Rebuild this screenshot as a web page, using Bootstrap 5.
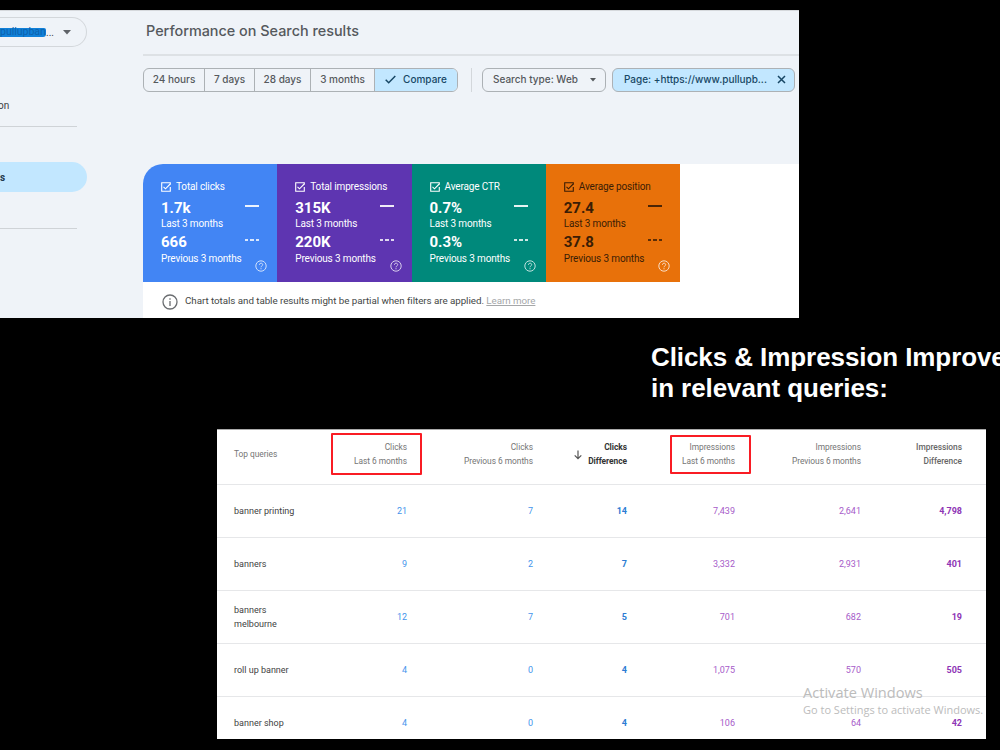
<!DOCTYPE html>
<html lang="en">
<head>
<meta charset="utf-8">
<meta name="viewport" content="width=device-width, initial-scale=1">
<title>Performance on Search results</title>
<link href="https://cdn.jsdelivr.net/npm/bootstrap@5.3.0/dist/css/bootstrap.min.css" rel="stylesheet">
<style>
html{overflow:hidden}
body{background:#000;width:1000px;height:750px;overflow:hidden;font-family:Roboto,sans-serif;color:#3c4043}
.console{margin-top:10px;width:799px;height:308px;background:#eff3f8;border-top:1px solid #d5d8dc}
.side{width:143px;flex:none;font-size:10px}
.site-pill{width:87px;height:30px;margin-top:6px;border:1px solid #d3d7db;border-left:0;border-radius:0 15px 15px 0;padding-right:15px}
.scribble{font-size:10.5px;line-height:8px;background:#1080d8;color:#0b62ad;width:46px;border-radius:0 2px 3px 0;height:9px}
.side-rule{width:77px;height:1px;background:#cfd3d7}
.side-on{width:87px;height:30px;background:#c2e7ff;border-radius:0 15px 15px 0;color:#1f3a4d}
.page-title{font-family:Inter,sans-serif;font-weight:500;font-size:14.4px;letter-spacing:0;height:43px;padding:0 0 4px 3px;color:#55595d}
.title-rule{height:2px;background:#dde1e5}
.gtext{font-family:Inter,sans-serif;font-size:10px;font-weight:500;color:#55595d}
.filters{margin-top:11.5px;height:24px}
.range,.chip{border:1.5px solid #acb1b5;border-radius:6px;height:24px}
.range{width:315px;overflow:hidden}
.range>div{border-right:1.5px solid #acb1b5}
.range>div:last-child{border-right:0}
.picked{background:#c2e7ff;color:#174765}
.v-rule{width:1px;height:24px;background:#d3d7db}
.results{margin-top:72.5px;height:155px;background:#fff;border-radius:20px 0 0 0}
.tile{width:134.25px;height:118px;color:#fff;padding:16px 0 0 18px;font-size:10px;letter-spacing:-.14px;position:relative}
.tile:first-child{border-radius:20px 0 0 0}
.tile .name{height:14px;line-height:14px;gap:5px}
.tile .figure-row{height:22px;margin-top:3px;padding-right:18px}
.tile .fig{font-size:15px;font-weight:700;line-height:22px;letter-spacing:0}
.tile .when{height:10px;line-height:10px}
.tile .figure-row.second{margin-top:1px;height:24px}
.tile .second .fig{line-height:26px}
.solid{width:14px;height:2px;background:currentColor;margin-top:-5px;opacity:.9}
.dots{width:14px;height:2px;margin-top:-4px;background:repeating-linear-gradient(90deg,currentColor 0 3.4px,transparent 3.4px 5.3px);opacity:.8}
.help{position:absolute;right:10px;bottom:10px}
.note{height:37px;font-size:9.8px;letter-spacing:-.05px;padding:2px 0 0 19px;gap:7px;color:#444746}
.slide-title{margin:24px 0 0 651px;width:520px;font:700 26px/31px "Liberation Sans",Arial,sans-serif;color:#fff;white-space:nowrap;letter-spacing:-.08px}
.queries{position:relative;margin:25px 0 0 217px;width:769px;height:310px;background:#fff;overflow:hidden;border-top:1px solid #aaa}
.qtable{table-layout:fixed;width:769px;margin:0;font-size:9px;line-height:14px;border-collapse:separate;border-spacing:0}
.qtable th,.qtable td{padding:0;text-align:right;vertical-align:middle;height:53.1px;border-bottom:1px solid #e6e7e9}
.qtable th{height:54.5px;font-weight:400;font-size:8.4px;color:#757575;padding-bottom:5px;letter-spacing:-.03px}
.qtable th:first-child,.qtable td:first-child{text-align:left;padding-left:17px;color:#424242}
.qtable th:first-child{color:#757575}
.qtable th:last-child,.qtable td:last-child{padding-right:24px}
.qtable td.c{color:#4595ec}.qtable td.cd{color:#2b7cd3;font-weight:700}
.qtable td.i{color:#a65bc9}.qtable td.id{color:#8e35b5;font-weight:700}
.qtable th.sorted{color:#333;font-weight:700}
.qtable th.diff{font-weight:500;color:#666}
.qtable th.sorted svg{position:absolute;left:357px;top:20px}
.ring{position:absolute;border:2px solid #f91c24;border-radius:1px}
.activate{position:absolute;left:586px;top:253px;font-family:"Open Sans",sans-serif;color:#bcbcbc;white-space:nowrap;line-height:18px}
</style>
</head>
<body>
<svg class="d-none">
<symbol id="tick" viewBox="0 0 10 10"><path d="M9.3 5v4.3H.7V.7h8.6v2M2.5 4.8l2 2L9.2 2" fill="none" stroke="currentColor" stroke-width="1.1"/></symbol>
<symbol id="ask" viewBox="0 0 12 12"><circle cx="6" cy="6" r="5.2" fill="none" stroke="currentColor"/><path d="M4.4 4.8c0-2.2 3.3-2.1 3.3-.1C7.7 5.900 6 5.900 6 7.300M6 8.200v1.100" fill="none" stroke="currentColor"/></symbol>
</svg>
<section class="console d-flex overflow-hidden">
  <aside class="side d-flex flex-column">
    <div class="site-pill d-flex align-items-center justify-content-between"><span class="d-flex align-items-center"><span class="scribble">pullupban</span><span>...</span></span>
      <svg width="8" height="5"><path d="M0 0h8L4 4.500z" fill="#5f6368"/></svg></div>
    <div style="margin-top:52px;height:14px;line-height:14px;margin-left:-2px">on</div>
    <div class="side-rule" style="margin-top:13px"></div>
    <div class="side-on d-flex align-items-center fw-bold" style="margin-top:35px">s</div>
    <div class="side-rule" style="margin-top:36px"></div>
  </aside>
  <main class="flex-grow-1">
    <div class="page-title d-flex align-items-center">Performance on Search results</div>
    <div class="title-rule"></div>
    <div class="filters gtext d-flex align-items-center">
      <div class="range d-flex text-nowrap">
        <div class="d-flex align-items-center justify-content-center" style="width:61px">24 hours</div>
        <div class="d-flex align-items-center justify-content-center" style="width:50px">7 days</div>
        <div class="d-flex align-items-center justify-content-center" style="width:56px">28 days</div>
        <div class="d-flex align-items-center justify-content-center" style="width:64px">3 months</div>
        <div class="picked flex-grow-1 d-flex align-items-center justify-content-center" style="gap:7px"><svg width="11" height="9"><path d="M.7 4.800l3 3L10.300 1" fill="none" stroke="currentColor" stroke-width="1.500"/></svg>Compare</div>
      </div>
      <div class="v-rule" style="margin-left:13px"></div>
      <div class="chip d-flex align-items-center justify-content-between text-nowrap" style="margin-left:10px;width:124px;padding:0 9px 0 10px">Search type: Web<svg width="6" height="4"><path d="M0 0h6L3 3.500z" fill="currentColor"/></svg></div>
      <div class="chip picked d-flex align-items-center justify-content-between text-nowrap" style="margin-left:6px;width:183px;padding:0 8px 0 11px">Page: +https://www.pullupb...<svg width="9" height="9"><path d="M1 1l7 7M8 1L1 8" stroke="currentColor" stroke-width="1.500"/></svg></div>
    </div>
    <div class="results">
      <div class="d-flex">
        <div class="tile" style="background:#4285f4"><div class="name d-flex align-items-center"><svg width="10" height="10"><use href="#tick"/></svg>Total clicks</div>
          <div class="figure-row d-flex justify-content-between align-items-center"><span class="fig">1.7k</span><i class="solid"></i></div><div class="when">Last 3 months</div>
          <div class="figure-row second d-flex justify-content-between align-items-center"><span class="fig">666</span><i class="dots"></i></div><div class="when">Previous 3 months</div>
          <svg class="help opacity-75" width="12" height="12"><use href="#ask"/></svg></div>
        <div class="tile" style="background:#5e35b1"><div class="name d-flex align-items-center"><svg width="10" height="10"><use href="#tick"/></svg>Total impressions</div>
          <div class="figure-row d-flex justify-content-between align-items-center"><span class="fig">315K</span><i class="solid"></i></div><div class="when">Last 3 months</div>
          <div class="figure-row second d-flex justify-content-between align-items-center"><span class="fig">220K</span><i class="dots"></i></div><div class="when">Previous 3 months</div>
          <svg class="help opacity-75" width="12" height="12"><use href="#ask"/></svg></div>
        <div class="tile" style="background:#00897b"><div class="name d-flex align-items-center"><svg width="10" height="10"><use href="#tick"/></svg>Average CTR</div>
          <div class="figure-row d-flex justify-content-between align-items-center"><span class="fig">0.7%</span><i class="solid"></i></div><div class="when">Last 3 months</div>
          <div class="figure-row second d-flex justify-content-between align-items-center"><span class="fig">0.3%</span><i class="dots"></i></div><div class="when">Previous 3 months</div>
          <svg class="help opacity-75" width="12" height="12"><use href="#ask"/></svg></div>
        <div class="tile" style="background:#e8710a;color:#3a1d05"><div class="name d-flex align-items-center"><svg width="10" height="10"><use href="#tick"/></svg>Average position</div>
          <div class="figure-row d-flex justify-content-between align-items-center"><span class="fig">27.4</span><i class="solid"></i></div><div class="when">Last 3 months</div>
          <div class="figure-row second d-flex justify-content-between align-items-center"><span class="fig">37.8</span><i class="dots"></i></div><div class="when">Previous 3 months</div>
          <svg class="help opacity-75 text-white" width="12" height="12"><use href="#ask"/></svg></div>
      </div>
      <div class="note d-flex align-items-center"><svg width="16" height="16"><circle cx="8" cy="8" r="7" fill="none" stroke="#6a6d70" stroke-width="1.300"/><path d="M8 7v5M8 4.300v1.400" stroke="#6a6d70" stroke-width="1.300"/></svg><span>Chart totals and table results might be partial when filters are applied. <u style="color:#a5a7a9">Learn more</u></span></div>
    </div>
  </main>
</section>
<h1 class="slide-title">Clicks &amp; Impression Improvement<br>in relevant queries:</h1>
<section class="queries">
  <table class="qtable">
    <colgroup><col style="width:100px"><col style="width:90px"><col style="width:126px"><col style="width:94px"><col style="width:108px"><col style="width:126px"><col style="width:125px"></colgroup>
    <thead><tr><th>Top queries</th><th>Clicks<br>Last 6 months</th><th>Clicks<br>Previous 6 months</th><th class="sorted"><svg width="8" height="10"><path d="M4 .5v8M.7 5.300L4 8.600l3.300-3.300" fill="none" stroke="#555" stroke-width="1.200"/></svg>Clicks<br>Difference</th><th>Impressions<br>Last 6 months</th><th>Impressions<br>Previous 6 months</th><th class="diff">Impressions<br>Difference</th></tr></thead>
    <tbody>
      <tr><td>banner printing</td><td class="c">21</td><td class="c">7</td><td class="cd">14</td><td class="i">7,439</td><td class="i">2,641</td><td class="id">4,798</td></tr>
      <tr><td>banners</td><td class="c">9</td><td class="c">2</td><td class="cd">7</td><td class="i">3,332</td><td class="i">2,931</td><td class="id">401</td></tr>
      <tr><td>banners<br>melbourne</td><td class="c">12</td><td class="c">7</td><td class="cd">5</td><td class="i">701</td><td class="i">682</td><td class="id">19</td></tr>
      <tr><td>roll up banner</td><td class="c">4</td><td class="c">0</td><td class="cd">4</td><td class="i">1,075</td><td class="i">570</td><td class="id">505</td></tr>
      <tr><td>banner shop</td><td class="c">4</td><td class="c">0</td><td class="cd">4</td><td class="i">106</td><td class="i">64</td><td class="id">42</td></tr>
    </tbody>
  </table>
  <div class="ring" style="left:114px;top:3px;width:91px;height:42px"></div>
  <div class="ring" style="left:453px;top:5px;width:81px;height:39px"></div>
  <div class="activate"><div style="font-size:14.6px">Activate Windows</div><div style="font-size:11px;line-height:17px">Go to Settings to activate Windows.</div></div>
</section>
<script src="https://cdn.jsdelivr.net/npm/bootstrap@5.3.0/dist/js/bootstrap.bundle.min.js"></script>
</body>
</html>
